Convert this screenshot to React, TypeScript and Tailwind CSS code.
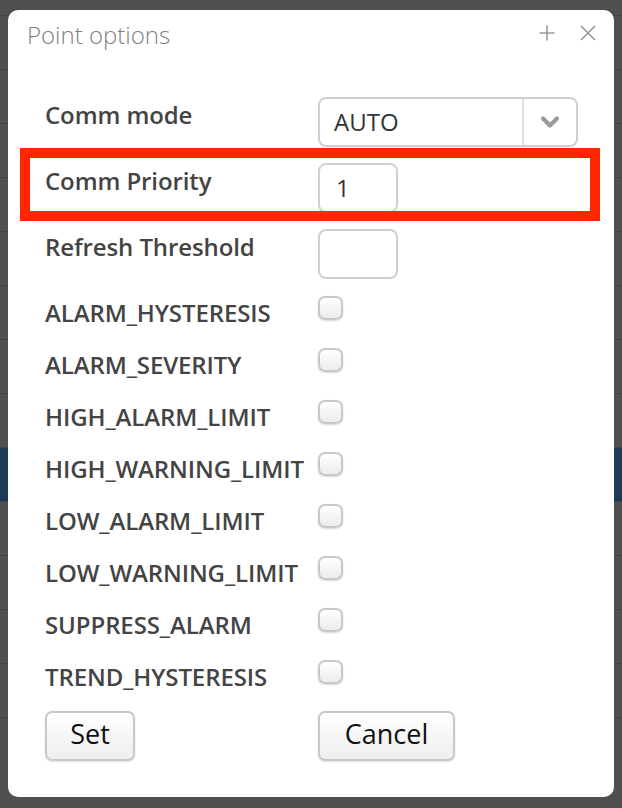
import React from "react";

const flags = [
  "ALARM_HYSTERESIS",
  "ALARM_SEVERITY",
  "HIGH_ALARM_LIMIT",
  "HIGH_WARNING_LIMIT",
  "LOW_ALARM_LIMIT",
  "LOW_WARNING_LIMIT",
  "SUPPRESS_ALARM",
  "TREND_HYSTERESIS",
];

function Label({ children }: { children: React.ReactNode }) {
  return (
    <div className="w-[273px] shrink-0 pt-[2px] text-[24px] leading-8 font-semibold tracking-[-0.1px] text-[#444] whitespace-nowrap">
      {children}
    </div>
  );
}

function BgRow({ blue, last }: { blue?: boolean; last?: boolean }) {
  return (
    <div
      className={`flex h-[54px] shrink-0 border-t border-[#434343] ${
        blue ? "bg-[#1d3a57]" : ""
      }`}
    >
      <div className="w-[45px]" />
      <div className="w-[253px] border-l border-[#434343] pl-[28px] flex items-center">
        {last && <span>ANALOG_VIRTUAL</span>}
      </div>
      <div className="w-[175px] border-l border-[#434343] pl-[29px] flex items-center">
        {last && <span>0.0</span>}
      </div>
      <div className="w-[134px] border-l border-[#434343] pl-[29px] flex items-center">
        {last && <span>OK</span>}
      </div>
      <div className="flex-1 border-l border-[#434343]" />
    </div>
  );
}

export default function App() {
  return (
    <div className="relative w-[622px] h-[808px] overflow-hidden bg-[#4f4f4f] font-['Open_Sans',sans-serif]">
      {/* table behind the dialog */}
      <div className="flex flex-col text-[24px] text-[#2a2a2a]">
        <div className="h-[15px] shrink-0" />
        {Array.from({ length: 14 }).map((_, i) => (
          <BgRow key={i} blue={i === 8} last={i === 13} />
        ))}
      </div>

      {/* dialog */}
      <div className="absolute left-[8px] top-[10px] w-[606px] h-[787px] rounded-[10px] bg-white">
        <div className="flex items-start pl-[19px] pr-[18px] pt-[9px]">
          <h2 className="flex-1 text-[24px] leading-8 font-light text-[#808080]">Point options</h2>
          <div className="flex items-center gap-[25px] pt-[6px]">
            <svg width="16" height="16" viewBox="0 0 16 16" stroke="#999" strokeWidth="1.6" fill="none">
              <path d="M8 0.5v15M0.5 8h15" />
            </svg>
            <svg width="16" height="16" viewBox="0 0 16 16" stroke="#999" strokeWidth="1.6" fill="none">
              <path d="M1 1l14 14M15 1L1 15" />
            </svg>
          </div>
        </div>

        <div className="mt-[46px] pl-[37px] flex flex-col gap-4">
          <div className="flex items-start">
            <Label>Comm mode</Label>
            <div className="flex h-[50px] w-[260px] rounded-[8px] border-2 border-[#d0d0d0] bg-white">
              <div className="flex-1 flex items-center pl-[14px] text-[24px] text-[#333]">AUTO</div>
              <div className="w-[54px] border-l-2 border-[#e0e0e0] flex items-center justify-center">
                <svg width="20" height="14" viewBox="0 0 20 14" fill="none" stroke="#9a9a9a" strokeWidth="4.2" strokeLinecap="round" strokeLinejoin="round">
                  <path d="M3 3.5l7 7 7-7" />
                </svg>
              </div>
            </div>
          </div>

          <div className="flex items-start">
            <Label>Comm Priority</Label>
            <div className="flex h-[50px] w-[80px] items-center rounded-[8px] border-2 border-[#d0d0d0] pl-[16px] text-[24px] text-[#333]">
              1
            </div>
          </div>

          <div className="flex items-start">
            <Label>Refresh Threshold</Label>
            <div className="h-[50px] w-[80px] rounded-[8px] border-2 border-[#d0d0d0]" />
          </div>

          {flags.map((f) => (
            <div key={f} className="flex items-start h-[36px]">
              <Label>{f}</Label>
              <div className="mt-[1px] h-[24px] w-[25px] rounded-[7px] border-2 border-[#c8c8c8] bg-gradient-to-b from-white to-[#ececec] shadow-[0_1px_2px_rgba(0,0,0,0.15)]" />
            </div>
          ))}

          <div className="flex items-start">
            <div className="w-[273px] shrink-0">
              <button className="h-[50px] w-[90px] rounded-[7px] border-2 border-[#c8c8c8] bg-gradient-to-b from-white to-[#eeeeee] pb-[6px] text-[27px] leading-none text-[#111] shadow-[0_1px_2px_rgba(0,0,0,0.12)]">
                Set
              </button>
            </div>
            <button className="h-[50px] w-[137px] rounded-[7px] border-2 border-[#c8c8c8] bg-gradient-to-b from-white to-[#eeeeee] pb-[6px] text-[27px] leading-none text-[#111] shadow-[0_1px_2px_rgba(0,0,0,0.12)]">
              Cancel
            </button>
          </div>
        </div>

        {/* highlight annotation */}
        <div className="absolute left-[12px] top-[138px] w-[580px] h-[73px] border-[10px] border-[#ff2600]" />
      </div>
    </div>
  );
}
